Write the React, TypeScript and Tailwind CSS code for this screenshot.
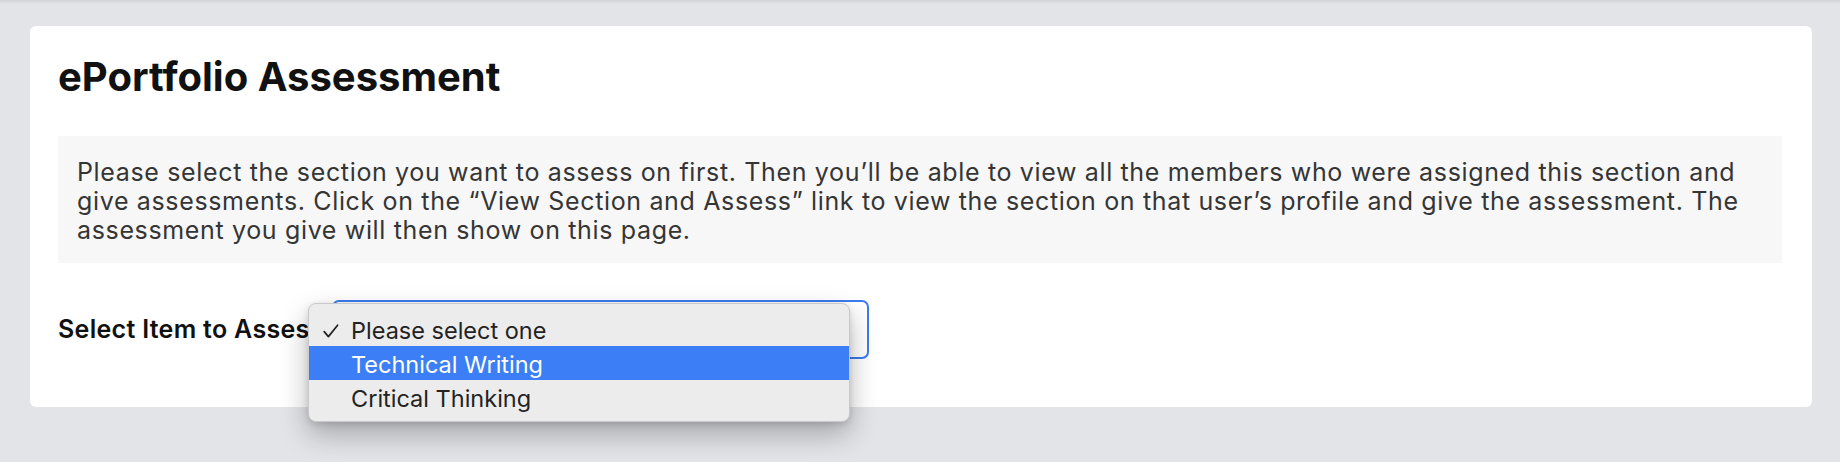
import React from "react";

const options = ["Please select one", "Technical Writing", "Critical Thinking"];

const CheckMark = () => (
  <svg width="16" height="14" viewBox="0 0 16 14" fill="none">
    <path
      d="M1.2 7.6 L5.4 12.6 L14.6 1.2"
      stroke="#222"
      strokeWidth="1.7"
      strokeLinecap="round"
      strokeLinejoin="round"
    />
  </svg>
);

const SelectMenu = () => {
  const selected = 0;
  const highlighted = 1;
  return (
    <div className="absolute left-[-24px] top-[3px] z-10 w-[542px] rounded-[8px] border border-[#c9c9cb] bg-[#ececec] pt-[8px] pb-[7px] shadow-[0_12px_28px_rgba(0,0,0,0.28),0_2px_6px_rgba(0,0,0,0.12)]">
      {options.map((opt, i) => (
        <div
          key={opt}
          className={
            i === highlighted
              ? "flex h-[34px] items-center bg-[#3b7ef5] pt-[3px] text-white"
              : "flex h-[34px] items-center pt-[3px] text-[#232323]"
          }
        >
          <span className="flex w-[42px] justify-end pr-[12px]">
            {i === selected && <CheckMark />}
          </span>
          <span className="text-[23.5px]">{opt}</span>
        </div>
      ))}
    </div>
  );
};

export default function App() {
  return (
    <div
      className="min-h-[462px] bg-[#e3e4e8] pb-[55px]"
      style={{ fontFamily: "Inter, 'Noto Sans', sans-serif" }}
    >
      <div className="h-[4px] bg-gradient-to-b from-[#d2d3d7] to-[#e3e4e8]" />
      <div className="ml-[30px] mr-[28px] mt-[22px] rounded-[6px] bg-white px-[28px] pt-[29px] pb-[48px]">
        <h1 className="text-[40px] font-bold leading-[44px] text-[#111]">
          ePortfolio Assessment
        </h1>
        <div className="mt-[37px] mr-[2px] bg-[#f7f7f7] px-[19px] pt-[22px] pb-[18px] text-[25px] leading-[29px] tracking-[0.65px] text-[#353535]">
          Please select the section you want to assess on first. Then you’ll be
          able to view all the members who were assigned this section and
          <br />
          give assessments. Click on the “View Section and Assess” link to view
          the section on that user’s profile and give the assessment. The
          <br />
          assessment you give will then show on this page.
        </div>
        <div className="mt-[37px] flex items-center">
          <label className="w-[274px] whitespace-nowrap text-[25px] font-semibold tracking-[0.3px] text-[#111]">
            Select Item to Assess
          </label>
          <div className="relative">
            <div className="h-[59px] w-[537px] rounded-[7px] border-2 border-[#3b7cf0] bg-white" />
            <SelectMenu />
          </div>
        </div>
      </div>
    </div>
  );
}
